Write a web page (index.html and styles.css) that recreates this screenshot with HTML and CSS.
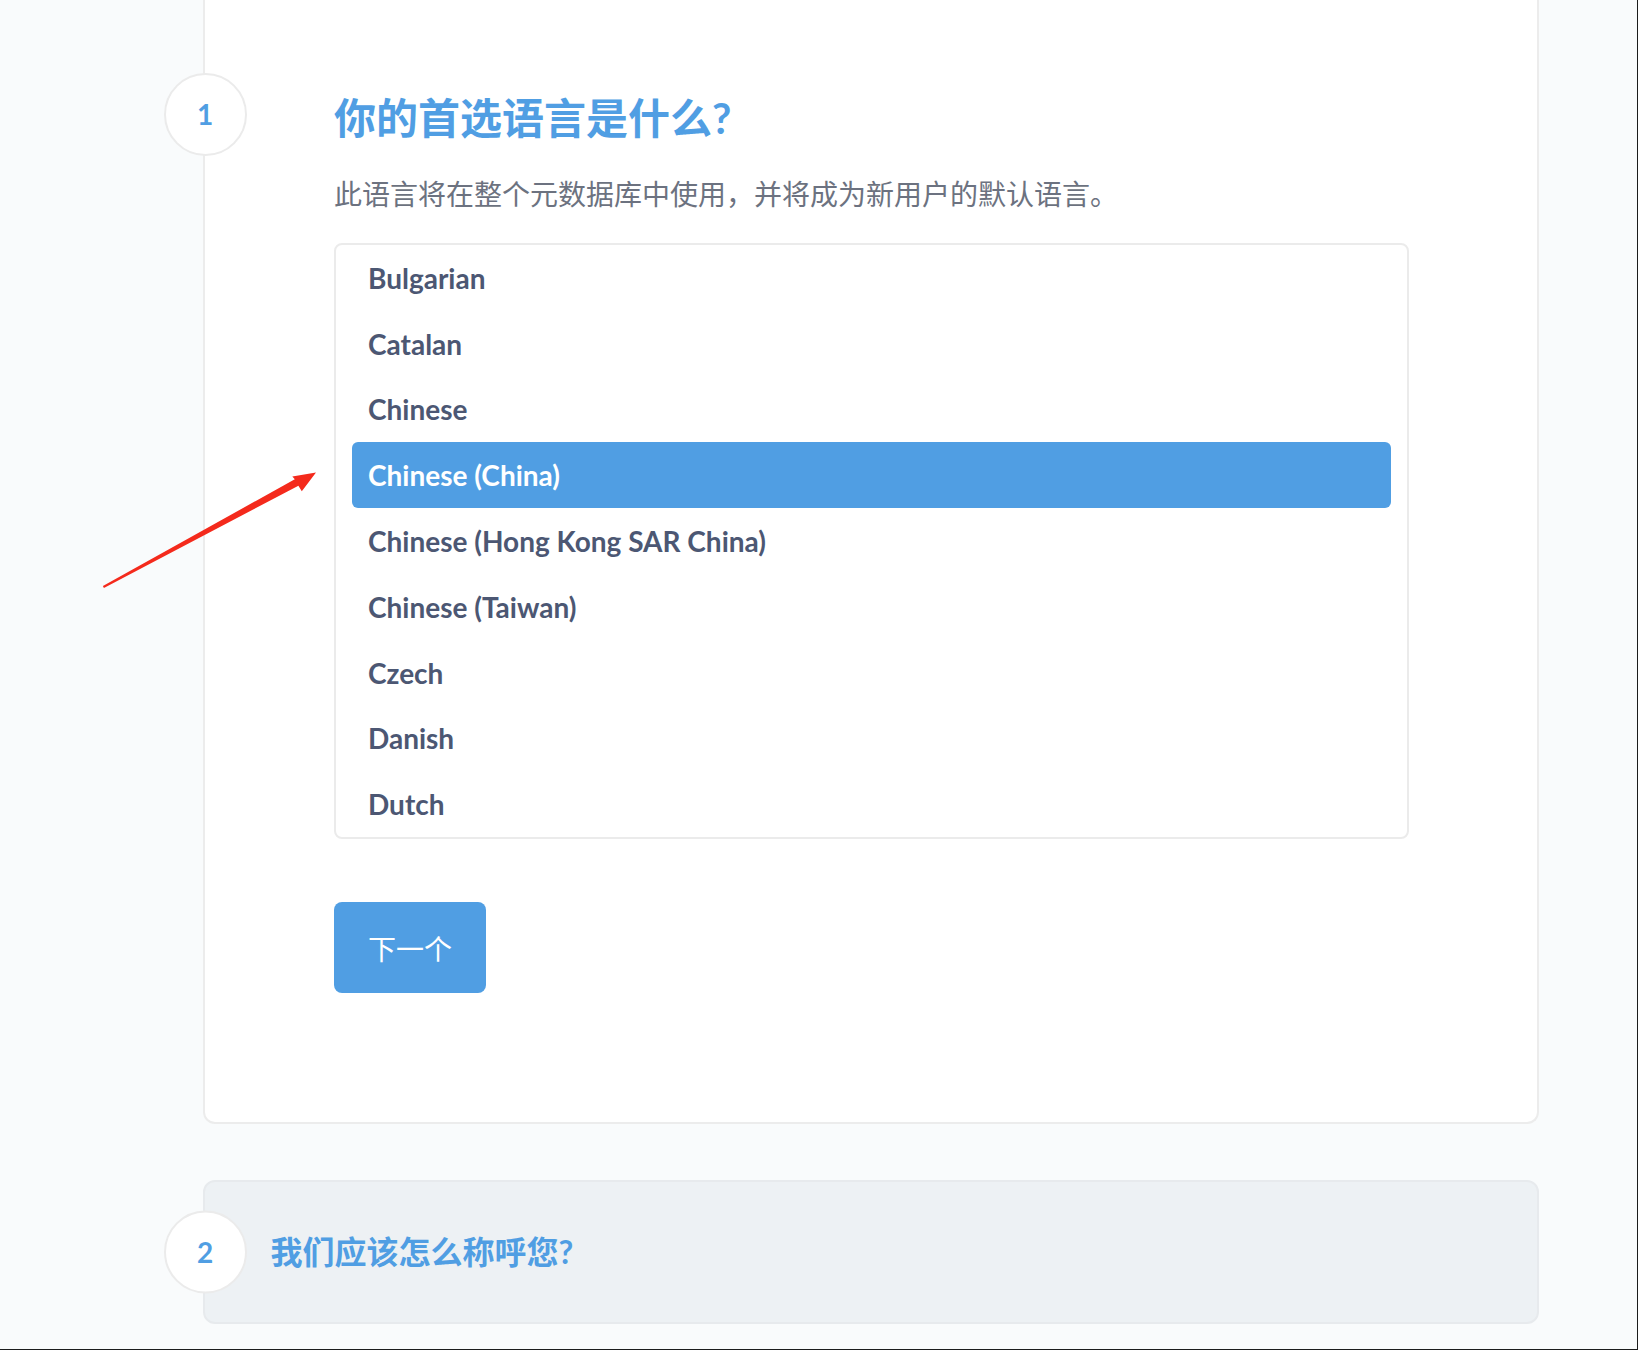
FILE: index.html
```html
<!DOCTYPE html>
<html lang="zh-CN">
<head>
<meta charset="utf-8">
<title>Metabase setup</title>
<link rel="stylesheet" href="styles.css">
</head>
<body>
<div class="page">
  <section class="step step-active">
    <div class="badge">1</div>
    <div class="step-body">
      <h2 class="step-title">你的首选语言是什么?</h2>
      <p class="step-desc">此语言将在整个元数据库中使用，并将成为新用户的默认语言。</p>
      <ul class="lang-list">
        <li class="lang-item">Bulgarian</li>
        <li class="lang-item">Catalan</li>
        <li class="lang-item">Chinese</li>
        <li class="lang-item is-selected">Chinese (China)</li>
        <li class="lang-item">Chinese (Hong Kong SAR China)</li>
        <li class="lang-item">Chinese (Taiwan)</li>
        <li class="lang-item">Czech</li>
        <li class="lang-item">Danish</li>
        <li class="lang-item">Dutch</li>
      </ul>
      <button class="btn-next" type="button">下一个</button>
    </div>
  </section>
  <section class="step step-collapsed">
    <div class="badge">2</div>
    <h3 class="step-title-sm">我们应该怎么称呼您?</h3>
  </section>
</div>
<svg class="annotation" width="1638" height="1350" viewBox="0 0 1638 1350">
  <polygon fill="#f42a1c" points="102.9,586.1 294.8,479.2 292.3,476.6 316,472.5 301.8,491.2 298.4,485.8 103.9,587.9"/>
</svg>
<div class="frame"></div>
</body>
</html>
```
FILE: styles.css
```css
html, body {
  margin: 0;
  padding: 0;
}
body {
  background: #f9fbfc;
  font-family: "Lato", "Noto Sans CJK SC", sans-serif;
  width: 1638px;
  height: 1350px;
  overflow: hidden;
  position: relative;
}
.page {
  display: flex;
  flex-direction: column;
  padding-left: 203px;
}
.step {
  position: relative;
  box-sizing: border-box;
  width: 1336px;
}
.step-active {
  background: #fff;
  border: 2px solid #ececec;
  border-top: 0;
  border-radius: 0 0 12px 12px;
  padding: 93px 0 129px 129px;
}
.badge {
  position: absolute;
  left: -41.5px;
  top: 72.5px;
  box-sizing: border-box;
  width: 83px;
  height: 83px;
  border-radius: 50%;
  border: 2px solid #ebebeb;
  background: #fff;
  color: #509ee3;
  font-family: "Lato", sans-serif;
  font-weight: 700;
  font-size: 28px;
  display: flex;
  align-items: center;
  justify-content: center;
}
.step-title {
  margin: 0;
  font-size: 42px;
  line-height: 50px;
  font-weight: 700;
  color: #509ee3;
}
.step-desc {
  margin: 33px 0 0;
  font-size: 28px;
  line-height: 36px;
  color: #6c7280;
  font-weight: 400;
}
.lang-list {
  list-style: none;
  margin: 31px 0 0;
  box-sizing: border-box;
  width: 1075px;
  height: 596px;
  padding: 0 16px;
  border: 2px solid #ebebeb;
  border-radius: 8px;
  overflow: hidden;
}
.lang-item {
  height: 65.8px;
  display: flex;
  align-items: center;
  padding-left: 16px;
  font-size: 28px;
  font-weight: 700;
  color: #4c5773;
  border-radius: 6px;
}
.lang-item.is-selected {
  background: #509ee3;
  color: #fff;
}
.btn-next {
  display: block;
  margin-top: 63px;
  width: 152px;
  height: 91px;
  border: 0;
  border-radius: 8px;
  background: #509ee3;
  color: #fff;
  font-family: "Noto Sans CJK SC", sans-serif;
  font-size: 28px;
  font-weight: 400;
  padding: 0;
}
.step-collapsed {
  margin-top: 55.5px;
  height: 144px;
  background: #edf1f4;
  border: 2px solid #e7eaed;
  border-radius: 12px;
  display: flex;
  align-items: center;
  padding-left: 65.6px;
}
.step-collapsed .badge {
  top: 50%;
  transform: translateY(-50%);
}
.step-title-sm {
  margin: 0;
  font-size: 32px;
  line-height: 40px;
  font-weight: 700;
  color: #509ee3;
}
.annotation {
  position: absolute;
  left: 0;
  top: 0;
  pointer-events: none;
}
.frame {
  position: fixed;
  inset: 0;
  border-right: 1px solid #1c1c1c;
  border-bottom: 1px solid #1c1c1c;
  pointer-events: none;
}
```
